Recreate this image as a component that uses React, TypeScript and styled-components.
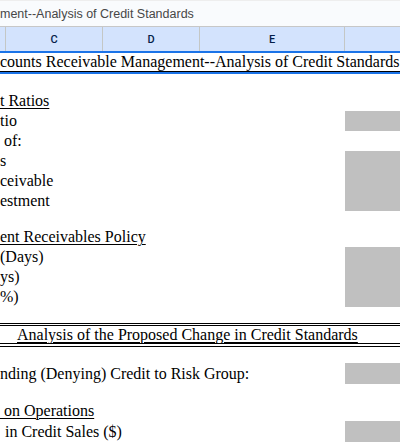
import React from 'react';
import styled, { createGlobalStyle } from 'styled-components';

const GlobalStyle = createGlobalStyle`
  html, body {
    margin: 0;
    padding: 0;
    background: #ffffff;
    overflow: hidden;
  }
`;

interface Line {
  text?: string;
  height: number;
  shaded?: boolean;
  underline?: boolean;
  indent?: number;
}

const columns = [
  { key: 'B', width: 6, label: '' },
  { key: 'C', width: 97, label: 'C' },
  { key: 'D', width: 97, label: 'D' },
  { key: 'E', width: 145, label: 'E' },
  { key: 'F', width: 60, label: '' },
];

const topLines: Line[] = [
  { height: 17 },
  { text: 't Ratios', height: 20, underline: true },
  { text: 'tio', height: 20, shaded: true },
  { text: '\u00a0of:', height: 20 },
  { text: 's', height: 20, shaded: true },
  { text: 'ceivable', height: 20, shaded: true },
  { text: 'estment', height: 20, shaded: true },
  { height: 16 },
  { text: 'ent Receivables Policy', height: 20, underline: true },
  { text: '(Days)', height: 20, shaded: true },
  { text: 'ys)', height: 20, shaded: true },
  { text: '%)', height: 20, shaded: true },
  { height: 16 },
];

const bottomLines: Line[] = [
  { height: 16 },
  { text: 'nding (Denying) Credit to Risk Group:', height: 21, shaded: true },
  { height: 17 },
  { text: '\u00a0on Operations', height: 20, underline: true },
  { text: '\u00a0in Credit Sales ($)', height: 22, shaded: true, indent: 1 },
];

const Page = styled.div`
  width: 400px;
  height: 442px;
  overflow: hidden;
  display: flex;
  flex-direction: column;
  background: #ffffff;
`;

const TitleBar = styled.div`
  height: 27px;
  flex: none;
  display: flex;
  align-items: center;
  background: #f9fbfd;
  border-top: 1px solid #eeeeee;
  border-bottom: 1px solid #c7c7c7;
  box-sizing: border-box;
  font-family: 'Liberation Sans', Arial, sans-serif;
  font-size: 12.5px;
  color: #474747;
  white-space: nowrap;
`;

const HeaderRow = styled.div`
  display: flex;
  height: 24px;
  flex: none;
  background: #d3e3fd;
`;

const HeaderCell = styled.div<{ $width: number }>`
  width: ${(p) => p.$width}px;
  flex: none;
  box-sizing: border-box;
  border-right: 1px solid #c4c7c5;
  display: flex;
  align-items: center;
  justify-content: center;
  font-family: Roboto, 'Liberation Sans', sans-serif;
  font-size: 11px;
  font-weight: 500;
  color: #041e49;
`;

const Sheet = styled.div`
  display: flex;
  flex-direction: column;
  font-family: 'Liberation Serif', 'Times New Roman', serif;
  font-size: 16px;
  color: #000000;
  white-space: nowrap;
`;

const Selection = styled.div`
  border-top: 2px solid #1a73e8;
  border-bottom: 2px solid #1a73e8;
`;

const TitleRow = styled.div`
  height: 18px;
  display: flex;
  align-items: center;
  border-bottom: 1px solid #000000;
  overflow: hidden;
`;

const Row = styled.div<{ $height: number }>`
  display: flex;
  height: ${(p) => p.$height}px;
  flex: none;
`;

const Label = styled.div<{ $underline?: boolean; $indent: number }>`
  width: 345px;
  flex: none;
  display: flex;
  align-items: center;
  overflow: hidden;

  span {
    margin-left: ${(p) => p.$indent}px;
    text-decoration: ${(p) => (p.$underline ? 'underline' : 'none')};
    text-underline-offset: 2px;
    text-decoration-thickness: 1px;
  }
`;

const Value = styled.div<{ $shaded?: boolean }>`
  flex: 1;
  background: ${(p) => (p.$shaded ? '#c0c0c0' : 'transparent')};
`;

const SectionHeading = styled.div`
  height: 24px;
  flex: none;
  box-sizing: border-box;
  border-top: 3px double #000000;
  border-bottom: 4px double #000000;
  display: flex;
  align-items: center;
  padding-left: 17px;

  span {
    text-decoration: underline;
    text-underline-offset: 2px;
    text-decoration-thickness: 1px;
  }
`;

const SheetLine: React.FC<{ line: Line }> = ({ line }) => (
  <Row $height={line.height}>
    <Label $underline={line.underline} $indent={line.indent ?? 0}>
      {line.text && <span>{line.text}</span>}
    </Label>
    <Value $shaded={line.shaded} />
  </Row>
);

export default function App() {
  return (
    <>
      <GlobalStyle />
      <Page>
        <TitleBar>ment--Analysis of Credit Standards</TitleBar>
        <HeaderRow>
          {columns.map((c) => (
            <HeaderCell key={c.key} $width={c.width}>
              {c.label}
            </HeaderCell>
          ))}
        </HeaderRow>
        <Sheet>
          <Selection>
            <TitleRow>counts Receivable Management--Analysis of Credit Standards</TitleRow>
          </Selection>
          {topLines.map((line, i) => (
            <SheetLine key={`t${i}`} line={line} />
          ))}
          <SectionHeading>
            <span>Analysis of the Proposed Change in Credit Standards</span>
          </SectionHeading>
          {bottomLines.map((line, i) => (
            <SheetLine key={`b${i}`} line={line} />
          ))}
        </Sheet>
      </Page>
    </>
  );
}
